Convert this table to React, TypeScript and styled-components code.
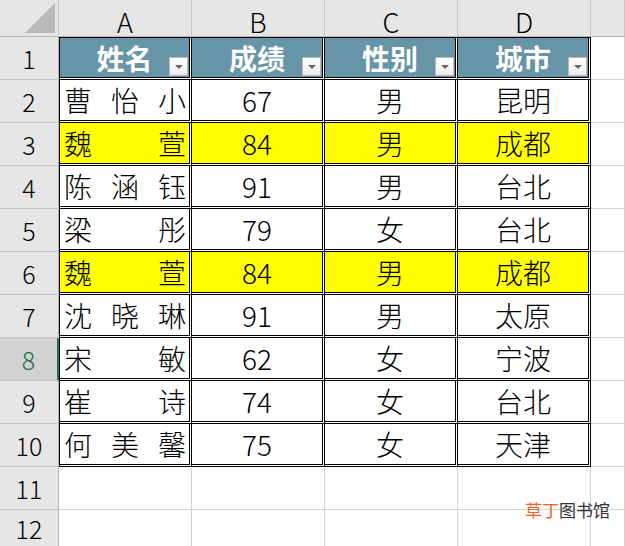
import React from 'react';
import styled, { createGlobalStyle, css } from 'styled-components';

const GlobalStyle = createGlobalStyle`
  html, body { margin: 0; padding: 0; background: #fff; }
  body { font-family: "Noto Sans CJK SC", "Noto Sans", sans-serif; }
  #root { width: 625px; height: 546px; }
`;

const Sheet = styled.div`
  position: relative;
  width: 625px;
  height: 546px;
  overflow: hidden;
  display: grid;
  grid-template-columns: 59px repeat(4, 133px) 1fr;
  grid-template-rows: 37px repeat(11, 43px) 1fr;
  background: #fff;
`;

const Corner = styled.div`
  position: relative;
  background: #e6e6e6;
  border-right: 1px solid #c6c6c6;
  border-bottom: 1px solid #b4b4b4;
  display: flex;
  justify-content: flex-end;
  align-items: flex-end;
  padding: 0 3px 3px 0;
  box-sizing: border-box;
`;

const CornerTriangle = styled.div`
  width: 30px;
  height: 30px;
  background: #b9b9b9;
  clip-path: polygon(100% 0, 100% 100%, 0 100%);
`;

const ColHeader = styled.div`
  background: #e6e6e6;
  border-right: 1px solid #c6c6c6;
  border-bottom: 1px solid #b4b4b4;
  box-sizing: border-box;
  display: flex;
  align-items: center;
  justify-content: center;
  padding-top: 6px;
  font-size: 27px;
  font-weight: 300;
  line-height: 1;
  color: #000;
`;

const RowHeader = styled.div<{ $selected?: boolean }>`
  background: ${(p) => (p.$selected ? '#d2d2d2' : '#e6e6e6')};
  border-right: ${(p) => (p.$selected ? '2px solid #217346' : '1px solid #b4b4b4')};
  border-bottom: 1px solid #c6c6c6;
  box-sizing: border-box;
  display: flex;
  align-items: center;
  justify-content: center;
  font-size: 25px;
  font-weight: 300;
  color: ${(p) => (p.$selected ? '#217346' : '#000')};
`;

const EmptyCell = styled.div`
  border-right: 1px solid #d4d4d4;
  border-bottom: 1px solid #d4d4d4;
  box-sizing: border-box;
  background: #fff;
`;

const Slot = styled.div<{ $first?: boolean; $top?: boolean }>`
  background: #fff;
  border-right: 1px solid #000;
  border-bottom: 1px solid #000;
  ${(p) => p.$first && css`border-left: 1px solid #000;`}
  ${(p) => p.$top && css`border-top: 1px solid #000;`}
  box-sizing: border-box;
  padding: 0 1px 1px 0;
  display: flex;
`;

type Fill = 'white' | 'yellow' | 'head';
const fills: Record<Fill, string> = {
  white: '#ffffff',
  yellow: '#ffff00',
  head: '#6794a7',
};

const CellBox = styled.div<{ $fill: Fill; $spread?: boolean }>`
  position: relative;
  flex: 1;
  background: ${(p) => fills[p.$fill]};
  border-right: 1px solid #000;
  border-bottom: 1px solid #000;
  box-sizing: border-box;
  display: flex;
  align-items: center;
  justify-content: ${(p) => (p.$spread ? 'space-between' : 'center')};
  padding: ${(p) => (p.$spread ? '0 3px 0 4px' : '0')};
  font-size: 28px;
  line-height: 1;
  color: ${(p) => (p.$fill === 'head' ? '#fff' : '#000')};
  font-weight: ${(p) => (p.$fill === 'head' ? 700 : 300)};
`;

const FilterButton = styled.div`
  position: absolute;
  right: 1px;
  bottom: 1px;
  width: 19px;
  height: 19px;
  box-sizing: border-box;
  border: 1px solid #b8b8b8;
  background: linear-gradient(#ffffff, #ececec);
  display: flex;
  align-items: center;
  justify-content: center;
`;

const Arrow = styled.div`
  width: 0;
  height: 0;
  border-left: 4px solid transparent;
  border-right: 4px solid transparent;
  border-top: 4px solid #666;
  margin-top: 1px;
`;

const Watermark = styled.div`
  position: absolute;
  left: 525px;
  top: 500px;
  font-size: 17px;
  line-height: 20px;
  color: #333;
  white-space: nowrap;
`;

const Accent = styled.span`
  color: #f0652a;
`;

type Row = { name: string; score: string; gender: string; city: string; hl?: boolean };
const rows: Row[] = [
  { name: '曹怡小', score: '67', gender: '男', city: '昆明' },
  { name: '魏萱', score: '84', gender: '男', city: '成都', hl: true },
  { name: '陈涵钰', score: '91', gender: '男', city: '台北' },
  { name: '梁彤', score: '79', gender: '女', city: '台北' },
  { name: '魏萱', score: '84', gender: '男', city: '成都', hl: true },
  { name: '沈晓琳', score: '91', gender: '男', city: '太原' },
  { name: '宋敏', score: '62', gender: '女', city: '宁波' },
  { name: '崔诗', score: '74', gender: '女', city: '台北' },
  { name: '何美馨', score: '75', gender: '女', city: '天津' },
];

const headers = ['姓名', '成绩', '性别', '城市'];

export default function App() {
  return (
    <>
      <GlobalStyle />
      <Sheet>
        <Corner>
          <CornerTriangle />
        </Corner>
        {['A', 'B', 'C', 'D', ''].map((c, i) => (
          <ColHeader key={i}>{c}</ColHeader>
        ))}

        <RowHeader>1</RowHeader>
        {headers.map((h, i) => (
          <Slot key={h} $first={i === 0} $top>
            <CellBox $fill="head">
              {h}
              <FilterButton>
                <Arrow />
              </FilterButton>
            </CellBox>
          </Slot>
        ))}
        <EmptyCell />

        {rows.map((r, idx) => {
          const n = idx + 2;
          const fill: Fill = r.hl ? 'yellow' : 'white';
          return (
            <React.Fragment key={n}>
              <RowHeader $selected={n === 8}>{n}</RowHeader>
              <Slot $first>
                <CellBox $fill={fill} $spread>
                  {Array.from(r.name).map((ch, k) => (
                    <span key={k}>{ch}</span>
                  ))}
                </CellBox>
              </Slot>
              <Slot>
                <CellBox $fill={fill}>{r.score}</CellBox>
              </Slot>
              <Slot>
                <CellBox $fill={fill}>{r.gender}</CellBox>
              </Slot>
              <Slot>
                <CellBox $fill={fill}>{r.city}</CellBox>
              </Slot>
              <EmptyCell />
            </React.Fragment>
          );
        })}

        {[11, 12].map((n) => (
          <React.Fragment key={n}>
            <RowHeader>{n}</RowHeader>
            <EmptyCell />
            <EmptyCell />
            <EmptyCell />
            <EmptyCell />
            <EmptyCell />
          </React.Fragment>
        ))}

        <Watermark>
          <Accent>草丁</Accent>图书馆
        </Watermark>
      </Sheet>
    </>
  );
}
